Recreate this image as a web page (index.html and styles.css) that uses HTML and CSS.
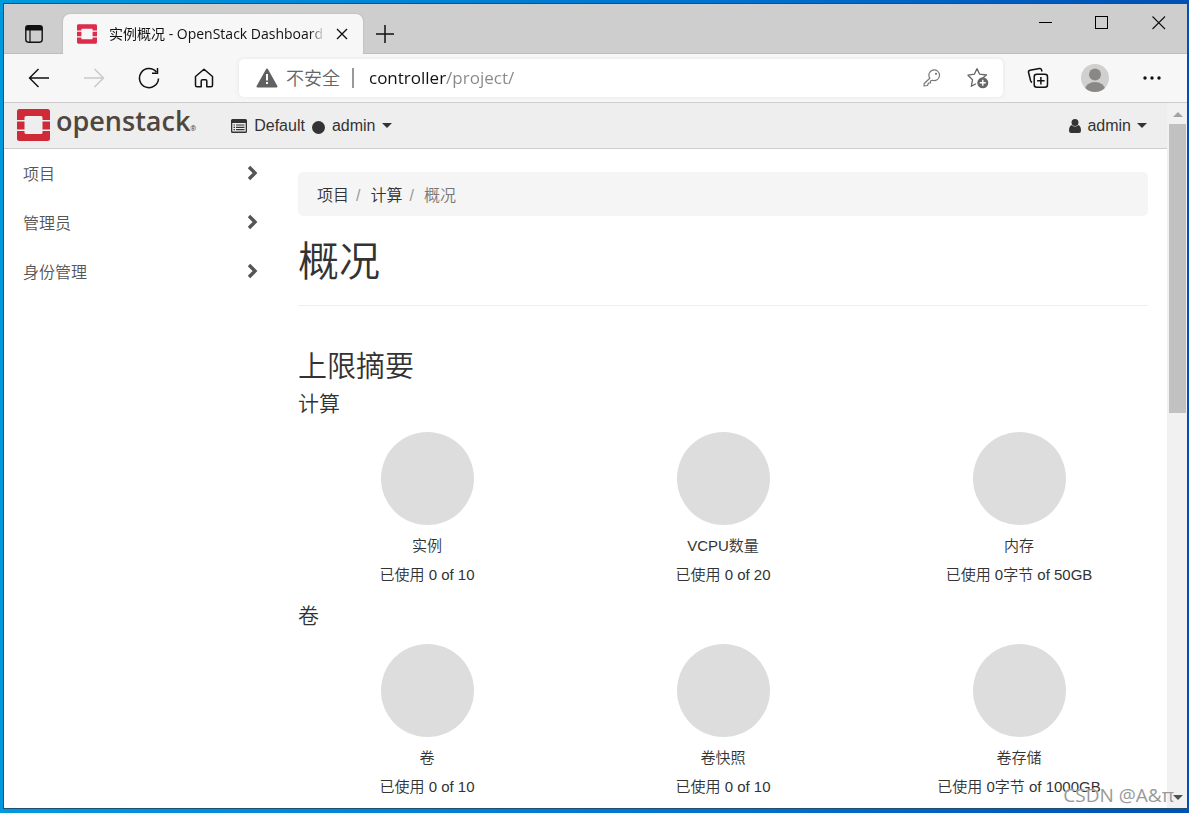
FILE: index.html
```html
<!DOCTYPE html>
<html lang="zh-CN">
<head>
<meta charset="utf-8">
<title>实例概况 - OpenStack Dashboard</title>
<link rel="stylesheet" href="styles.css">
</head>
<body>
<div class="window">
  <div class="tabstrip">
    <button class="icon-btn tab-menu" aria-label="标签页操作">
      <svg width="20" height="20" viewBox="0 0 20 20"><rect x="1.8" y="1.8" width="16.4" height="16.4" rx="2.6" fill="none" stroke="#111" stroke-width="1.4"/><path d="M1.5 6.5V4.2Q1.5 1.5 4.2 1.5H15.8Q18.500 1.5 18.500 4.2V6.5Z" fill="#111"/><path d="M6 6V18" stroke="#111" stroke-width="1.2"/></svg>
    </button>
    <div class="tab">
      <svg class="favicon" width="20" height="20" viewBox="0 0 34 33"><path fill="#dc2b4b" d="M2.500 0H31.500Q34 0 34 2.500V10.500H26.500V9Q26.500 7.500 25 7.500H9Q7.500 7.500 7.500 9V10.500H0V2.500Q0 0 2.500 0ZM0 22.500H7.500V24Q7.500 25.500 9 25.500H25Q26.500 25.500 26.500 24V22.500H34V30.500Q34 33 31.500 33H2.500Q0 33 0 30.500ZM0 12.500H7.500V20.500H0ZM26.500 12.500H34V20.500H26.500Z"/></svg>
      <span class="tab-title">实例概况 - OpenStack Dashboard</span>
      <button class="icon-btn" aria-label="关闭标签页">
        <svg width="12" height="12" viewBox="0 0 12 12"><path d="M1 1L11 11M11 1L1 11" stroke="#111" stroke-width="1.4"/></svg>
      </button>
    </div>
    <button class="icon-btn new-tab" aria-label="新建标签页">
      <svg width="18" height="18" viewBox="0 0 18 18"><path d="M9 0V18M0 9H18" stroke="#111" stroke-width="1.5"/></svg>
    </button>
    <div class="window-controls">
      <button class="icon-btn" aria-label="最小化"><svg width="14" height="14" viewBox="0 0 14 14"><path d="M1 6.500H14" stroke="#000"/></svg></button>
      <button class="icon-btn" aria-label="最大化"><svg width="14" height="14" viewBox="0 0 14 14"><rect x=".5" y=".5" width="12" height="12" fill="none" stroke="#000"/></svg></button>
      <button class="icon-btn" aria-label="关闭"><svg width="14" height="14" viewBox="0 0 14 14"><path d="M.5 .5L13 13M13 .5L.5 13" stroke="#111" stroke-width="1.100"/></svg></button>
    </div>
  </div>

  <div class="toolbar">
    <div class="nav-buttons">
      <button class="icon-btn" aria-label="后退"><svg width="22" height="20" viewBox="0 0 22 20"><path d="M21 10H1.500M10.500 1L1.500 10L10.500 19" fill="none" stroke="#111" stroke-width="1.400"/></svg></button>
      <button class="icon-btn" aria-label="前进" disabled><svg width="22" height="20" viewBox="0 0 22 20"><path d="M1 10H20.500M11.500 1L20.500 10L11.500 19" fill="none" stroke="#c9c9c9" stroke-width="1.400"/></svg></button>
      <button class="icon-btn" aria-label="刷新"><svg width="22" height="22" viewBox="0 0 22 22"><path d="M20.500 11.500A9.500 9.500 0 1 1 18.300 5M19.500 1V6.300H14" fill="none" stroke="#111" stroke-width="1.500"/></svg></button>
      <button class="icon-btn" aria-label="主页"><svg width="20" height="20" viewBox="0 0 20 20"><path d="M1.500 8.500L10 1.200L18.500 8.500V17.300Q18.500 18.800 17 18.800H12.800V13Q12.800 11.800 11.600 11.800H8.400Q7.200 11.800 7.200 13V18.800H3Q1.500 18.800 1.500 17.300Z" fill="none" stroke="#111" stroke-width="1.500" stroke-linejoin="round"/></svg></button>
    </div>
    <div class="address">
      <svg width="22" height="20" viewBox="0 0 22 20"><path d="M11 1.500L20.500 18.500H1.500Z" fill="#616161" stroke="#616161" stroke-width="2" stroke-linejoin="round"/><path d="M11 6V12.500M11 14V16" stroke="#fff" stroke-width="2"/></svg>
      <label class="insecure" for="url">不安全</label>
      <input class="url" id="url" type="text" value="controller/project/">
      <button class="icon-btn" aria-label="密码"><svg width="18" height="18" viewBox="0 0 18 18"><path d="M6.800 9.200A5.300 5.300 0 1 1 9.300 11.200L7.500 12V14H5.500L4.500 16.500L1 17L1.200 14.500Z" fill="none" stroke="#777" stroke-width="1.200" stroke-linejoin="round"/><circle cx="13" cy="4.800" r="1.100" fill="#777"/></svg></button>
      <button class="icon-btn" aria-label="收藏"><svg width="22" height="22" viewBox="0 0 22 22"><path d="M10 1.500L12.600 7.200L19.500 8L16 10.800M10 1.500L7.400 7.200L1 8.200L5.500 12.800L4.300 19.300L9 16.800" fill="none" stroke="#666" stroke-width="1.300" stroke-linejoin="round"/><circle cx="15.800" cy="15.800" r="5.500" fill="#666"/><path d="M15.800 12.800V18.800M12.800 15.800H18.800" stroke="#fff" stroke-width="1.400"/></svg></button>
    </div>
    <div class="tool-buttons">
      <button class="icon-btn" aria-label="集锦"><svg width="22" height="22" viewBox="0 0 22 22"><rect x="7.200" y="7.200" width="13.300" height="13" rx="2.500" fill="none" stroke="#111" stroke-width="1.500"/><path d="M13.900 10V17.500M10.100 13.700H17.600M15 4.500L14.500 2.800Q14.100 1.200 12.500 1.500L3 3.200Q1.200 3.600 1.500 5.300L3.600 13.800Q4 15 5 15.500" fill="none" stroke="#111" stroke-width="1.500"/></svg></button>
      <button class="icon-btn" aria-label="个人资料"><svg width="28" height="28" viewBox="0 0 28 28"><defs><clipPath id="face"><circle cx="14" cy="14" r="14"/></clipPath></defs><g clip-path="url(#face)"><rect width="28" height="28" fill="#d2d0ce"/><circle cx="14" cy="10.500" r="6" fill="#8a8886"/><ellipse cx="14" cy="25.500" rx="10" ry="7.500" fill="#8a8886"/></g></svg></button>
      <button class="icon-btn" aria-label="设置及其他"><svg width="18" height="4" viewBox="0 0 18 4"><g fill="#111"><circle cx="2" cy="2" r="1.700"/><circle cx="9" cy="2" r="1.700"/><circle cx="16" cy="2" r="1.700"/></g></svg></button>
    </div>
  </div>

  <div class="viewport">
    <div class="page">
      <header class="topbar">
        <a class="brand" href="#">
          <svg width="33" height="32" viewBox="0 0 33 32"><path fill="#cf2a38" d="M2.500 0H30.500Q33 0 33 2.500V11H25.500V8.500Q25.500 7 24 7H9Q7.500 7 7.500 8.500V11H0V2.500Q0 0 2.500 0ZM0 22H7.500V23.500Q7.500 25 9 25H24Q25.500 25 25.500 23.500V22H33V29.500Q33 32 30.500 32H2.500Q0 32 0 29.500ZM0 12.500H7.500V20.500H0ZM25.500 12.500H33V20.500H25.500Z"/></svg>
          <span class="brand-name">openstack<small>®</small></span>
        </a>
        <button class="menu">
          <svg width="16" height="14" viewBox="0 0 16 14"><path fill="#333" fill-rule="evenodd" d="M1.500 0H14.500Q16 0 16 1.500V12.500Q16 14 14.500 14H1.500Q0 14 0 12.500V1.500Q0 0 1.500 0ZM1.300 4V12.600H14.700V4Z"/><path d="M2.500 6H4M5 6H13.500M2.500 8.300H4M5 8.300H13.500M2.500 10.600H4M5 10.600H13.500" stroke="#333" stroke-width="1.200"/></svg>
          <span>Default</span><i class="dot"></i><span>admin</span><i class="caret"></i>
        </button>
        <button class="menu user">
          <svg width="12" height="14" viewBox="0 0 12 14"><path fill="#333" d="M6 0A3.300 3.300 0 0 1 6 7A3.300 3.300 0 0 1 6 0ZM2.700 6Q6 9 9.300 6Q12 7 12 11.500Q12 14 10 14H2Q0 14 0 11.500Q0 7 2.700 6Z"/></svg>
          <span>admin</span><i class="caret"></i>
        </button>
      </header>
      <div class="body">
        <nav class="sidebar">
          <a href="#">项目<svg width="11" height="16" viewBox="0 0 11 16"><path d="M2 2L8 8L2 14" fill="none" stroke="#555" stroke-width="3.400"/></svg></a>
          <a href="#">管理员<svg width="11" height="16" viewBox="0 0 11 16"><path d="M2 2L8 8L2 14" fill="none" stroke="#555" stroke-width="3.400"/></svg></a>
          <a href="#">身份管理<svg width="11" height="16" viewBox="0 0 11 16"><path d="M2 2L8 8L2 14" fill="none" stroke="#555" stroke-width="3.400"/></svg></a>
        </nav>
        <main class="main">
          <ol class="breadcrumb">
            <li><a href="#">项目</a></li>
            <li><a href="#">计算</a></li>
            <li>概况</li>
          </ol>
          <h1>概况</h1>
          <h2>上限摘要</h2>
          <h3>计算</h3>
          <div class="quotas">
            <div class="quota"><div class="pie"></div><div>实例</div><div>已使用 0 of 10</div></div>
            <div class="quota"><div class="pie"></div><div>VCPU数量</div><div>已使用 0 of 20</div></div>
            <div class="quota"><div class="pie"></div><div>内存</div><div>已使用 0字节 of 50GB</div></div>
          </div>
          <h3>卷</h3>
          <div class="quotas">
            <div class="quota"><div class="pie"></div><div>卷</div><div>已使用 0 of 10</div></div>
            <div class="quota"><div class="pie"></div><div>卷快照</div><div>已使用 0 of 10</div></div>
            <div class="quota"><div class="pie"></div><div>卷存储</div><div>已使用 0字节 of 1000GB</div></div>
          </div>
        </main>
      </div>
    </div>
    <div class="scrollbar">
      <i class="arrow-up"></i>
      <div class="thumb"></div>
      <i class="arrow-down"></i>
    </div>
  </div>
  <span class="watermark">CSDN @A&amp;π</span>
</div>
</body>
</html>
```
FILE: styles.css
```css
* { box-sizing: border-box; }

body {
  margin: 0;
  min-height: 100vh;
  display: flex;
  padding: 3px 1px 4px 3px;
  background: linear-gradient(90deg, #0099dd, #0072cf 60%, #0050b5);
  font-family: "Liberation Sans", "Noto Sans CJK SC", sans-serif;
  font-weight: 350;
  font-size: 16px;
  color: #333;
}

button, input { font: inherit; color: inherit; }
a { color: inherit; text-decoration: none; }
svg { display: block; flex: none; }

.window {
  position: relative;
  flex: 1;
  display: flex;
  flex-direction: column;
  border: 1px solid #1d4f70;
  background: #fff;
}

.icon-btn {
  display: flex;
  align-items: center;
  justify-content: center;
  padding: 0;
  border: 0;
  background: none;
}

/* Tab strip */
.tabstrip {
  display: flex;
  align-items: flex-end;
  height: 50px;
  background: #cecece;
  box-shadow: inset 0 -1px #bdbdbd;
}
.tab-menu { width: 59px; height: 40px; }
.tab {
  display: flex;
  align-items: center;
  width: 300px;
  height: 40px;
  padding: 0 15px 0 14px;
  border-radius: 7px 7px 0 0;
  background: #f7f7f7;
  box-shadow: 0 0 2px #aaa;
  clip-path: inset(-4px -4px 0 -4px);
}
.tab-title {
  flex: 1;
  margin: 0 11px 0 12px;
  padding-bottom: 2px;
  overflow: hidden;
  white-space: nowrap;
  font-family: "Open Sans", "Noto Sans CJK SC", sans-serif;
  font-weight: 400;
  font-size: 14px;
  color: #111;
  mask-image: linear-gradient(90deg, #000 93%, transparent);
}
.new-tab { width: 44px; height: 40px; }
.window-controls {
  display: flex;
  align-self: flex-start;
  margin-left: auto;
}
.window-controls .icon-btn { width: 57px; height: 38px; }

/* Toolbar */
.toolbar {
  display: flex;
  align-items: center;
  height: 49px;
  background: #f7f7f7;
  border-bottom: 1px solid #ccc;
}
.nav-buttons { display: flex; padding: 0 8px 0 7px; }
.nav-buttons .icon-btn { width: 55px; height: 40px; }
.address {
  flex: 1;
  display: flex;
  align-items: center;
  height: 38px;
  padding: 0 14px 0 17px;
  border-radius: 5px;
  background: #fff;
  box-shadow: 0 0 4px #e4e4e4;
  font-family: "Open Sans", "Noto Sans CJK SC", sans-serif;
  font-size: 17px;
}
.insecure {
  margin-left: 8px;
  padding-right: 12px;
  border-right: 2px solid #999;
  line-height: 20px;
  font-size: 18px;
  color: #666;
}
.url {
  flex: 1;
  min-width: 0;
  padding: 0 0 2px 15px;
  border: 0;
  outline: 0;
  font-weight: 400;
  color: transparent;
  background: linear-gradient(90deg, #111 92px, #888 92px);
  background-clip: text;
}
.address .icon-btn { width: 22px; height: 30px; margin-left: 24px; }
.tool-buttons { display: flex; padding: 0 7px 0 6px; }
.tool-buttons .icon-btn { width: 57px; height: 40px; }

/* Page */
.viewport { flex: 1; display: flex; }
.page { flex: 1; min-width: 0; }
.topbar {
  display: flex;
  align-items: center;
  height: 46px;
  padding: 0 20px 0 13px;
  border-bottom: 1px solid #ccc;
  background: #eee;
}
.brand { display: flex; align-items: center; gap: 6px; padding-bottom: 1px; }
.brand-name {
  font-family: "Open Sans", sans-serif;
  font-weight: 600;
  font-size: 27px;
  line-height: 32px;
  color: #4f463e;
}
.brand-name small { font-size: 7px; }
.menu {
  display: flex;
  align-items: center;
  gap: 7px;
  margin-left: 35px;
  padding: 0;
  border: 0;
  background: none;
}
.user { gap: 6px; margin-left: auto; }
.dot { width: 13px; height: 13px; margin-top: 3px; border-radius: 50%; background: #333; }
.caret { border: 5px solid transparent; border-top-color: #333; border-bottom: 0; }

.body { display: flex; }
.sidebar { width: 275px; flex: none; }
.sidebar a {
  display: flex;
  align-items: center;
  justify-content: space-between;
  height: 49px;
  padding: 0 21px 2px 19px;
  color: #555;
}
.main { flex: 1; min-width: 0; padding: 23px 19px 0; }
.breadcrumb {
  display: flex;
  align-items: center;
  height: 44px;
  margin: 0;
  padding: 0 19px;
  border-radius: 5px;
  background: #f5f5f5;
  list-style: none;
  color: #777;
}
.breadcrumb a { color: #333; }
.breadcrumb li + li::before { content: "/"; padding: 0 10px 0 7px; color: #999; }

h1, h2, h3 { margin: 0; font-weight: 350; }
h1 {
  margin-top: 21px;
  padding-bottom: 18px;
  border-bottom: 1px solid #eee;
  font-size: 41px;
  line-height: 50px;
}
h2 { margin-top: 45px; font-size: 29px; line-height: 32px; }
h3 { margin: 10px 0 17px; font-size: 21px; line-height: 22px; }
.quotas {
  display: grid;
  grid-template-columns: repeat(3, 1fr);
  margin: 0 -19px 20px;
}
.quotas:last-child { margin-bottom: 0; }
.quota {
  display: grid;
  justify-items: center;
  row-gap: 8px;
  font-size: 15px;
  line-height: 21px;
}
.pie { width: 93px; height: 93px; margin-bottom: 2px; border-radius: 50%; background: #ddd; }

.scrollbar {
  display: flex;
  flex-direction: column;
  align-items: center;
  width: 20px;
  padding: 9px 1px 8px 2px;
  background: #f1f1f1;
}
.thumb { width: 17px; height: 42%; margin-top: 7px; background: #c1c1c1; }
.arrow-up { border: 5px solid transparent; border-bottom-color: #a3a3a3; border-top: 0; }
.arrow-down { margin-top: auto; border: 5px solid transparent; border-top-color: #505050; border-bottom: 0; }

.watermark {
  position: absolute;
  right: 13px;
  bottom: 0;
  font-family: "Open Sans", sans-serif;
  font-weight: 400;
  font-size: 19px;
  line-height: 26px;
  color: #999;
  text-shadow: 0 0 1px #fff;
}
```
